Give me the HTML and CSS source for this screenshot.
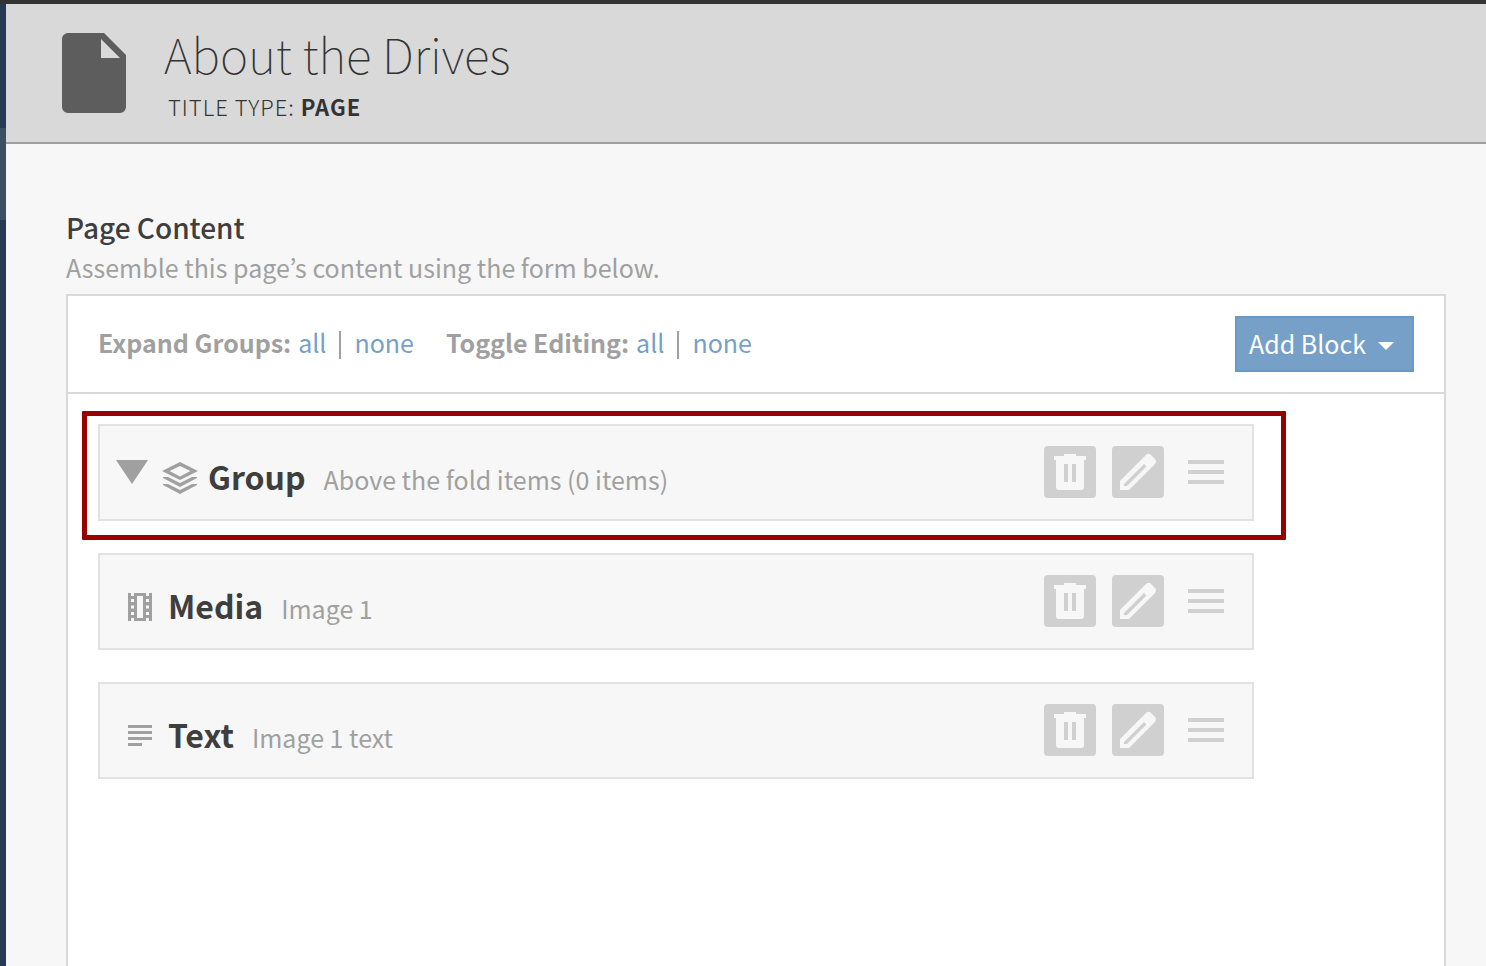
FILE: index.html
```html
<!DOCTYPE html>
<html lang="en">
<head>
  <meta charset="UTF-8" />
  <meta name="viewport" content="width=device-width, initial-scale=1" />
  <title>About the Drives</title>
  <link rel="stylesheet" href="styles.css">
</head>
<body>
  <!-- Shared icons -->
  <svg class="sprite" aria-hidden="true">
    <symbol id="icon-trash" viewBox="0 0 52 52">
      <path fill-rule="evenodd" d="M20 8H32V10H42V14H40V41a3 3 0 0 1-3 3H15a3 3 0 0 1-3-3V14H10V10H20ZM20 18V36H24V18ZM28 18V36H32V18Z" />
    </symbol>
    <symbol id="icon-pencil" viewBox="0 0 52 52">
      <path fill-rule="evenodd" d="M8 44V35L34 9Q36 7 38.500 8.500L43 13Q45 15.500 43 18L17 44ZM12 40H15L34.500 20.500L32 18L12 38Z" />
    </symbol>
    <symbol id="icon-drag" viewBox="0 0 36 24">
      <path d="M0 0H36V4H0ZM0 10H36V14H0ZM0 20H36V24H0Z" />
    </symbol>
  </svg>

  <div class="topbar"></div>
  <div class="app">
    <div class="sidebar">
      <div class="sidebar-active"></div>
    </div>

    <div class="page">
      <header class="page-header">
        <svg class="page-icon" viewBox="0 0 64 80">
          <path fill-rule="evenodd" d="M6 0H42L64 22V74a6 6 0 0 1-6 6H6a6 6 0 0 1-6-6V6a6 6 0 0 1 6-6ZM39 6V25H58Z" />
        </svg>
        <div>
          <h1 class="page-title">About the Drives</h1>
          <p class="page-type">Title type: <strong>Page</strong></p>
        </div>
      </header>

      <main class="content">
        <h2 class="section-title">Page Content</h2>
        <p class="section-help">Assemble this page’s content using the form below.</p>

        <div class="panel">
          <div class="toolbar">
            <div class="toggle">
              <strong>Expand Groups:</strong>
              <a href="#">all</a><span class="divider"></span><a href="#">none</a>
            </div>
            <div class="toggle">
              <strong>Toggle Editing:</strong>
              <a href="#">all</a><span class="divider"></span><a href="#">none</a>
            </div>
            <button type="button" class="add-block">Add Block <span class="caret"></span></button>
          </div>

          <div class="blocks">
            <section class="block block-group highlighted">
              <button type="button" class="collapse" aria-label="Collapse group"></button>
              <div class="block-label">
                <svg class="icon-layers" viewBox="0 0 36 34">
                  <path fill-rule="evenodd" d="M18 1L36 10L18 19L0 10ZM18 5L7.500 10L18 15.500L28.500 10Z" />
                  <path d="M1 16H6L18 22L30 16H35V17L18 26L1 17ZM1 23H6L18 29L30 23H35V24L18 33L1 24Z" />
                </svg>
                <h3 class="block-name">Group</h3>
                <span class="block-info">Above the fold items (0 items)</span>
              </div>
              <div class="actions">
                <button type="button" class="action" aria-label="Delete"><svg><use href="#icon-trash" /></svg></button>
                <button type="button" class="action" aria-label="Edit"><svg><use href="#icon-pencil" /></svg></button>
                <button type="button" class="drag" aria-label="Move"><svg><use href="#icon-drag" /></svg></button>
              </div>
            </section>

            <section class="block">
              <div class="block-label">
                <svg class="icon-type" viewBox="0 0 24 28">
                  <path fill-rule="evenodd" d="M0 0H3V3H6V0H18V3H21V0H24V28H21V25H18V28H6V25H3V28H0ZM9 3V25H15V3ZM3 6V9H6V6ZM3 12.500V15.500H6V12.500ZM3 19V22H6V19ZM18 6V9H21V6ZM18 12.500V15.500H21V12.500ZM18 19V22H21V19Z" />
                </svg>
                <h3 class="block-name">Media</h3>
                <span class="block-info">Image 1</span>
              </div>
              <div class="actions">
                <button type="button" class="action" aria-label="Delete"><svg><use href="#icon-trash" /></svg></button>
                <button type="button" class="action" aria-label="Edit"><svg><use href="#icon-pencil" /></svg></button>
                <button type="button" class="drag" aria-label="Move"><svg><use href="#icon-drag" /></svg></button>
              </div>
            </section>

            <section class="block">
              <div class="block-label">
                <svg class="icon-type" viewBox="0 0 24 28">
                  <path d="M0 3H24V6H0ZM0 9H24V12H0ZM0 15H24V18H0ZM0 21H14V24H0Z" />
                </svg>
                <h3 class="block-name">Text</h3>
                <span class="block-info">Image 1 text</span>
              </div>
              <div class="actions">
                <button type="button" class="action" aria-label="Delete"><svg><use href="#icon-trash" /></svg></button>
                <button type="button" class="action" aria-label="Edit"><svg><use href="#icon-pencil" /></svg></button>
                <button type="button" class="drag" aria-label="Move"><svg><use href="#icon-drag" /></svg></button>
              </div>
            </section>
          </div>
        </div>
      </main>
    </div>
  </div>
</body>
</html>
```
FILE: styles.css
```css
* {
  box-sizing: border-box;
}

body {
  margin: 0;
  min-height: 100vh;
  display: flex;
  flex-direction: column;
  background-color: #f7f7f7;
  color: #3e3e3e;
  font-family: "Noto Sans CJK JP", "Open Sans", sans-serif;
  font-size: 25px;
  line-height: 40px;
}

h1, h2, h3, p {
  margin: 0;
}

button {
  padding: 0;
  border: 0;
  background: none;
  font: inherit;
  cursor: pointer;
}

a {
  color: #76a0c7;
  text-decoration: none;
}

strong {
  font-weight: 700;
}

svg {
  display: block;
  fill: #a0a0a0;
}

.sprite {
  display: none;
}

.topbar {
  height: 4px;
  background-color: #333;
}

.app {
  flex: 1;
  display: flex;
}

.sidebar {
  width: 6px;
  padding-top: 124px;
  background-color: #263b53;
}

.sidebar-active {
  height: 92px;
  background-color: #3c5064;
}

.page {
  flex: 1;
  display: flex;
  flex-direction: column;
}

/* Header */
.page-header {
  display: flex;
  gap: 38px;
  height: 140px;
  padding: 20px 56px;
  background-color: #d9d9d9;
  border-bottom: 2px solid #9f9f9f;
  color: #333;
}

.page-icon {
  width: 64px;
  height: 80px;
  margin-top: 9px;
  fill: #5d5d5d;
}

.page-title {
  margin-bottom: 4px;
  font-size: 48px;
  font-weight: 100;
  line-height: 58px;
}

.page-type {
  padding-left: 4px;
  font-size: 22px;
  font-weight: 300;
  letter-spacing: 1px;
  text-transform: uppercase;
}

/* Content */
.content {
  flex: 1;
  display: flex;
  flex-direction: column;
  padding: 63px 40px 0 60px;
}

.section-title {
  font-size: 28px;
  font-weight: 500;
}

.section-help {
  color: #a0a0a0;
}

.panel {
  flex: 1;
  margin-top: 7px;
  background-color: #fff;
  border: 2px solid #d9d9d9;
  border-bottom: 0;
}

.toolbar {
  display: flex;
  align-items: center;
  gap: 32px;
  padding: 20px 30px;
  border-bottom: 2px solid #d9d9d9;
  color: #a0a0a0;
}

.toggle {
  display: flex;
  align-items: center;
  padding-bottom: 4px;
}

.toggle strong {
  margin-right: 7px;
}

.divider {
  width: 2px;
  height: 28px;
  margin: 6px 13px 0;
  background-color: #a0a0a0;
}

.add-block {
  display: flex;
  align-items: center;
  gap: 12px;
  height: 56px;
  margin-left: auto;
  padding: 0 18px 2px 12px;
  background-color: #76a0c7;
  border: 2px solid #6899c4;
  color: #fff;
}

.caret {
  margin-top: 6px;
  border: 8px solid transparent;
  border-top-color: #fff;
  border-bottom: 0;
}

/* Blocks */
.blocks {
  display: flex;
  flex-direction: column;
  gap: 32px;
  padding: 30px 190px 30px 30px;
}

.block {
  position: relative;
  display: flex;
  align-items: center;
  height: 97px;
  padding: 0 28px 2px;
  background-color: #f7f7f7;
  border: 2px solid #e2e2e2;
}

.block-group {
  padding-left: 16px;
}

.highlighted::after {
  content: "";
  position: absolute;
  inset: -15px -34px -21px -18px;
  border: 5px solid #900;
  border-radius: 1px;
  pointer-events: none;
}

.collapse {
  margin-right: 14px;
  border: 16px solid transparent;
  border-top: 24px solid #a0a0a0;
  border-bottom: 0;
}

.block-label {
  display: flex;
  align-items: center;
  padding-top: 12px;
}

.block-name {
  padding-bottom: 4px;
  font-size: 32px;
  font-weight: 700;
}

.icon-type {
  width: 24px;
  height: 28px;
  margin-right: 16px;
}

.icon-layers {
  width: 36px;
  height: 34px;
  margin-right: 10px;
}

.block-info {
  padding: 2px 0 0 18px;
  color: #a0a0a0;
}

.actions {
  display: flex;
  align-items: center;
  gap: 16px;
  margin-left: auto;
}

.action {
  background-color: #d0d0d0;
  border-radius: 4px;
}

.action svg {
  width: 52px;
  height: 52px;
  fill: #f7f7f7;
}

.drag {
  margin-left: 8px;
}

.drag svg {
  width: 36px;
  height: 24px;
  fill: #d0d0d0;
}
```
